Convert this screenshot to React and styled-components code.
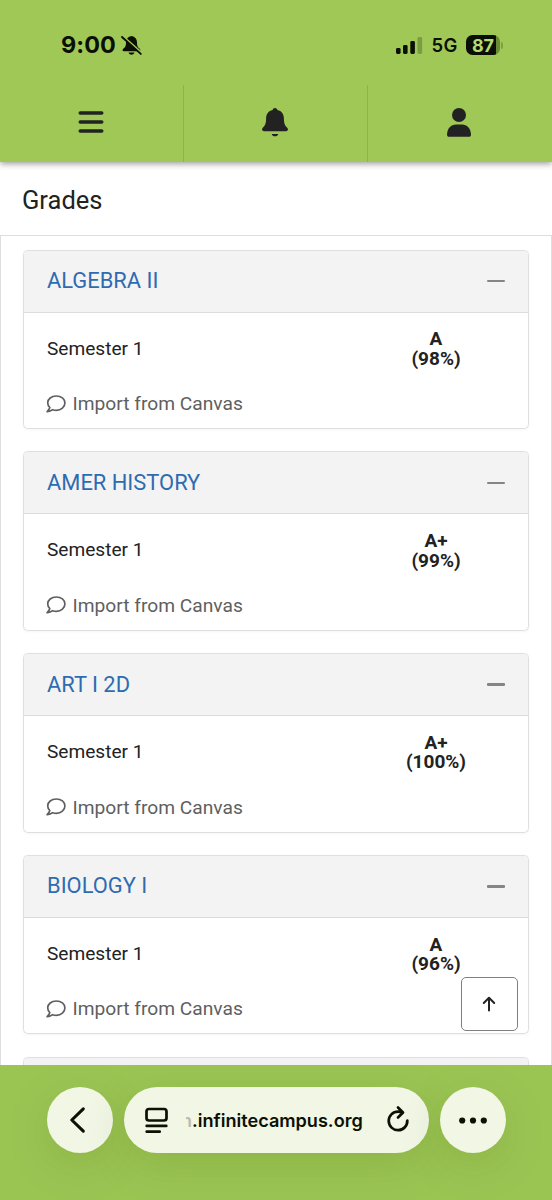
import React from 'react';
import styled, { createGlobalStyle } from 'styled-components';

const GlobalStyle = createGlobalStyle`
  * { box-sizing: border-box; }
  body { margin: 0; background: #fff; font-family: Roboto, "Liberation Sans", sans-serif; color: #222; }
  svg { display: block; flex: none; overflow: visible; }
`;

const Screen = styled.div`
  width: 552px;
  height: 1200px;
  display: flex;
  flex-direction: column;
  overflow: hidden;
  background: #fff;
`;

const TopArea = styled.header`
  flex: none;
  height: 162px;
  position: relative;
  z-index: 1;
  background: #9fc857;
  box-shadow: 0 2px 6px rgba(0, 0, 0, 0.38);
`;

const StatusBar = styled.div`
  height: 85px;
  padding: 5px 49px 0 61px;
  display: flex;
  align-items: center;
  justify-content: space-between;
  color: #0b0f05;
  font-family: Inter, "Liberation Sans", sans-serif;
`;

const StatusGroup = styled.div`
  display: flex;
  align-items: center;
  gap: ${(p) => p.$gap}px;
`;

const Clock = styled.span`
  font-size: 23.4px;
  font-weight: 700;
  line-height: 28px;
  letter-spacing: 0.1px;
`;

const Network = styled.span`
  font-size: 18.5px;
  font-weight: 600;
  line-height: 22px;
  letter-spacing: 0.2px;
`;

const Battery = styled.div`
  display: flex;
  align-items: center;
  gap: 1px;
`;

const BatteryBody = styled.div`
  width: 34px;
  height: 20px;
  border-radius: 6.5px;
  display: flex;
  align-items: center;
  justify-content: center;
  background: linear-gradient(90deg, #0b0f05 0 30px, #6b8a37 30px);
  color: #b5dc70;
  font-size: 18px;
  font-weight: 700;
  letter-spacing: -0.1px;
`;

const BatteryCap = styled.span`
  width: 2px;
  height: 7px;
  border-radius: 0 2px 2px 0;
  background: #7ea045;
`;

const NavBar = styled.nav`
  height: 77px;
  display: grid;
  grid-template-columns: 183px 184px 185px;
`;

const NavButton = styled.button`
  display: flex;
  align-items: center;
  justify-content: center;
  padding: 0 2px 3px 0;
  border: 0;
  border-left: ${(p) => (p.$divided ? '1px solid #8db34a' : '0')};
  background: none;
  color: #222;
`;

const PageTitle = styled.h1`
  flex: none;
  height: 73px;
  margin: 0;
  padding: 3px 22px 0;
  display: flex;
  align-items: center;
  font-size: 25.5px;
  font-weight: 400;
`;

const Content = styled.main`
  flex: 1;
  min-height: 0;
  overflow: hidden;
  padding: 13.5px 22.5px 0 22px;
  display: flex;
  flex-direction: column;
  gap: 22.3px;
  border: solid #dedede;
  border-width: 1px 1px 0;
`;

const Card = styled.section`
  flex: none;
  height: 179.5px;
  border: 1px solid #dfdfdf;
  border-radius: 4.5px;
  overflow: hidden;
  box-shadow: 0 1px 3px rgba(0, 0, 0, 0.04);
`;

const CardHeader = styled.div`
  height: 62px;
  padding: 0 23px;
  display: flex;
  align-items: center;
  justify-content: space-between;
  background: #f3f3f3;
  border-bottom: 1px solid #dcdcdc;
`;

const CourseLink = styled.a`
  color: #2f6bb0;
  font-size: 21.9px;
  line-height: 26px;
`;

const CollapseMark = styled.span`
  width: 18px;
  height: 2.6px;
  border-radius: 1px;
  background: #858585;
`;

const TermRow = styled.div`
  height: 73px;
  padding: 0 43.5px 2px 23px;
  display: flex;
  align-items: center;
  justify-content: space-between;
  font-size: 19.1px;
`;

const Score = styled.div`
  width: 96px;
  padding-top: 1.5px;
  text-align: center;
  font-size: 19px;
  font-weight: 700;
  line-height: 19.3px;
`;

const Note = styled.div`
  height: 36px;
  padding-left: 22px;
  display: flex;
  align-items: center;
  gap: 6.5px;
  color: #5f5f5f;
  font-size: 19.2px;
`;

const ToTop = styled.button`
  position: absolute;
  left: 461px;
  top: 977px;
  width: 57px;
  height: 54px;
  padding: 0 1px 0 0;
  display: flex;
  align-items: center;
  justify-content: center;
  border: 1.5px solid #7f7f7f;
  border-radius: 5px;
  background: #fff;
  color: #222;
`;

const BrowserBar = styled.footer`
  flex: none;
  height: 135px;
  padding: 22px 46.5px 0 46.5px;
  display: flex;
  align-items: flex-start;
  gap: 11px;
  overflow: hidden;
  background: #9bc553;
  color: #0c1005;
`;

const RoundButton = styled.button`
  flex: none;
  width: 66px;
  height: 66px;
  padding: 0 ${(p) => p.$nudge || 0}px 0 0;
  display: flex;
  align-items: center;
  justify-content: center;
  border: 0;
  border-radius: 50%;
  background: #f1f6e5;
  color: inherit;
  box-shadow: 0 12px 44px rgba(60, 90, 10, 0.15);
`;

const AddressBar = styled.div`
  flex: 1;
  height: 66px;
  padding: 0 20px 0 21.5px;
  display: flex;
  align-items: center;
  border-radius: 33px;
  background: #f1f6e5;
  box-shadow: 0 12px 44px rgba(60, 90, 10, 0.15);
`;

const Host = styled.div`
  flex: 1;
  display: flex;
  padding-left: 18px;
  font-family: Inter, "Liberation Sans", sans-serif;
  font-size: 18.1px;
  font-weight: 600;
  letter-spacing: 0;
`;

const FadedEdge = styled.span`
  width: 6px;
  display: flex;
  justify-content: flex-end;
  overflow: hidden;
  color: #b9bdb0;
`;

const BellOff = () => (
  <svg width="21" height="21" viewBox="0 0 21 21">
    <path fill="currentColor" d="M10.5 1C6.8 1.6 5 4 5 7.5c0 4-1 4.700-2.800 6.300C1 15 1.400 16.300 2.900 16.300h15.200c1.500 0 1.900-1.300.700-2.500C17 12.200 16 11.500 16 7.500 16 4 14.200 1.600 10.500 1ZM7.600 17.600h5.800c-.4 2.800-5.400 2.800-5.800 0Z" />
    <path d="M1.800 1.200 20.600 17.800" stroke="#9fc857" strokeWidth="2.200" />
    <path d="M1 2 19.800 18.900" stroke="currentColor" strokeWidth="1.900" strokeLinecap="round" />
  </svg>
);

const Signal = () => (
  <svg width="27" height="17" viewBox="0 0 27 17" fill="currentColor">
    <rect x="0" y="11" width="4.600" height="6" rx="1.400" />
    <rect x="7" y="8" width="4.600" height="9" rx="1.400" />
    <rect x="14.300" y="4" width="4.600" height="13" rx="1.400" />
    <rect x="21.500" y="0" width="4.600" height="17" rx="1.400" opacity=".24" />
  </svg>
);

const Menu = () => (
  <svg width="26" height="22" viewBox="0 0 26 22" stroke="currentColor" strokeWidth="3.600" strokeLinecap="round">
    <path d="M2.300 2h21.400M2.300 11h21.400M2.300 20h21.400" />
  </svg>
);

const Bell = () => (
  <svg width="26" height="29" viewBox="0 0 26 29" fill="currentColor">
    <path d="M13 0c1.300 0 2.200.8 2.400 2 4.300.9 6.500 4.300 6.500 8.600 0 5.100 1 7 3.500 9.500 1.200 1.300.5 3.100-1.300 3.100H1.900c-1.800 0-2.500-1.800-1.300-3.100 2.500-2.500 3.500-4.400 3.500-9.500C4.100 6.300 6.300 2.900 10.600 2 10.800.8 11.700 0 13 0ZM9.700 25.900h6.600c-.5 3.100-6.100 3.100-6.600 0Z" />
  </svg>
);

const Person = () => (
  <svg width="24" height="29" viewBox="0 0 24 29" fill="currentColor">
    <circle cx="12" cy="7" r="7" />
    <path d="M0 26.500C.4 20.400 4 16.600 9 16.600h6c5 0 8.600 3.800 9 9.900 0 1.500-.8 2.300-2.200 2.300H2.200C.8 28.800 0 28 0 26.500Z" />
  </svg>
);

const Comment = () => (
  <svg width="20" height="18" viewBox="0 0 20 18" fill="none" stroke="currentColor" strokeWidth="1.700" strokeLinejoin="round">
    <path d="M10.300 1C5.400 1 1.700 4 1.700 7.800c0 1.900.8 3.500 2.100 4.700-.3 1.500-1.300 2.900-2.700 4.100 2 .1 4-.6 5.500-1.900 1.200.4 2.400.6 3.700.6 4.900 0 8.600-3.200 8.600-7.300S15.200 1 10.300 1Z" />
  </svg>
);

const ArrowUp = () => (
  <svg width="14" height="16" viewBox="0 0 14 16" fill="none" stroke="currentColor" strokeWidth="2" strokeLinecap="round" strokeLinejoin="round">
    <path d="M7 14.500V2M1.800 7 7 1.800 12.200 7" />
  </svg>
);

const Back = () => (
  <svg width="15" height="26" viewBox="0 0 15 26" fill="none" stroke="currentColor" strokeWidth="3.100" strokeLinecap="round" strokeLinejoin="round">
    <path d="M13.300 1.800 1.800 13 13.300 24.200" />
  </svg>
);

const PageMenu = () => (
  <svg width="23" height="26" viewBox="0 0 23 26" fill="none" stroke="currentColor" strokeWidth="2.700" strokeLinecap="round">
    <rect x="1.500" y="2" width="20" height="11.500" rx="2.500" />
    <path d="M1.700 18.900h19.600M1.700 24.700h13" />
  </svg>
);

const Reload = () => (
  <svg width="22" height="28" viewBox="0 0 22 28" fill="none" stroke="currentColor" strokeWidth="2.700" strokeLinecap="round" strokeLinejoin="round">
    <path d="M20.300 14.500A9.300 9.300 0 1 1 11 5.600c1.700 0 3 .3 4.300.9M11 1.500l5 5-5 5" />
  </svg>
);

const More = () => (
  <svg width="28" height="7" viewBox="0 0 28 7" fill="currentColor">
    <circle cx="3.200" cy="3.500" r="3.100" />
    <circle cx="14" cy="3.500" r="3.100" />
    <circle cx="24.800" cy="3.500" r="3.100" />
  </svg>
);

const courses = [
  { name: 'ALGEBRA II', letter: 'A', percent: 98 },
  { name: 'AMER HISTORY', letter: 'A+', percent: 99 },
  { name: 'ART I 2D', letter: 'A+', percent: 100 },
  { name: 'BIOLOGY I', letter: 'A', percent: 96 },
];

function CourseCard({ name, letter, percent }) {
  return (
    <Card>
      <CardHeader>
        <CourseLink>{name}</CourseLink>
        <CollapseMark />
      </CardHeader>
      <TermRow>
        <span>Semester 1</span>
        <Score>
          {letter}
          <br />
          ({percent}%)
        </Score>
      </TermRow>
      <Note>
        <Comment />
        <span>Import from Canvas</span>
      </Note>
    </Card>
  );
}

export default function App() {
  return (
    <Screen>
      <GlobalStyle />
      <TopArea>
        <StatusBar>
          <StatusGroup $gap={5}>
            <Clock>9:00</Clock>
            <BellOff />
          </StatusGroup>
          <StatusGroup $gap={8.5}>
            <Signal />
            <Network>5G</Network>
            <Battery>
              <BatteryBody>87</BatteryBody>
              <BatteryCap />
            </Battery>
          </StatusGroup>
        </StatusBar>
        <NavBar>
          <NavButton aria-label="Menu"><Menu /></NavButton>
          <NavButton $divided aria-label="Notifications"><Bell /></NavButton>
          <NavButton $divided aria-label="Account"><Person /></NavButton>
        </NavBar>
      </TopArea>
      <PageTitle>Grades</PageTitle>
      <Content>
        {courses.map((course) => <CourseCard key={course.name} {...course} />)}
        <Card>
          <CardHeader />
        </Card>
      </Content>
      <ToTop aria-label="Back to top"><ArrowUp /></ToTop>
      <BrowserBar>
        <RoundButton $nudge={4} aria-label="Back"><Back /></RoundButton>
        <AddressBar>
          <PageMenu />
          <Host><FadedEdge>n</FadedEdge>.infinitecampus.org</Host>
          <Reload />
        </AddressBar>
        <RoundButton aria-label="More"><More /></RoundButton>
      </BrowserBar>
    </Screen>
  );
}
